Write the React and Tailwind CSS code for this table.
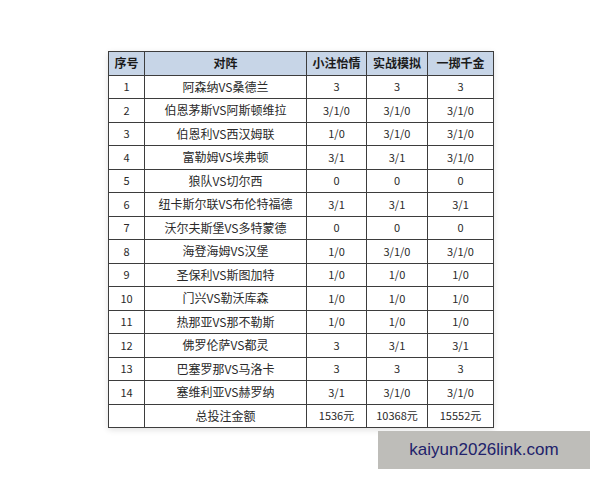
import React from "react";

const rows = [
  ["1", "阿森纳VS桑德兰", "3", "3", "3"],
  ["2", "伯恩茅斯VS阿斯顿维拉", "3/1/0", "3/1/0", "3/1/0"],
  ["3", "伯恩利VS西汉姆联", "1/0", "3/1/0", "3/1/0"],
  ["4", "富勒姆VS埃弗顿", "3/1", "3/1", "3/1/0"],
  ["5", "狼队VS切尔西", "0", "0", "0"],
  ["6", "纽卡斯尔联VS布伦特福德", "3/1", "3/1", "3/1"],
  ["7", "沃尔夫斯堡VS多特蒙德", "0", "0", "0"],
  ["8", "海登海姆VS汉堡", "1/0", "3/1/0", "3/1/0"],
  ["9", "圣保利VS斯图加特", "1/0", "1/0", "1/0"],
  ["10", "门兴VS勒沃库森", "1/0", "1/0", "1/0"],
  ["11", "热那亚VS那不勒斯", "1/0", "1/0", "1/0"],
  ["12", "佛罗伦萨VS都灵", "3", "3/1", "3/1"],
  ["13", "巴塞罗那VS马洛卡", "3", "3", "3"],
  ["14", "塞维利亚VS赫罗纳", "3/1", "3/1/0", "3/1/0"],
  ["", "总投注金额", "1536元", "10368元", "15552元"],
];

const cell = "border border-[#3d3d3d] text-center align-middle p-0";

export default function App() {
  return (
    <div
      className="relative w-[600px] h-[480px] bg-white overflow-hidden"
      style={{ fontFamily: '"Noto Sans CJK SC", "Noto Sans", sans-serif' }}
    >
      <div className="pt-[51px] pl-[108px]">
        <table className="table-fixed border-collapse w-[385px] text-[12px] leading-none text-[#2a2a2a] shadow-[0_2px_6px_rgba(0,0,0,0.12)]">
          <colgroup>
            <col className="w-[36px]" />
            <col className="w-[162px]" />
            <col className="w-[60px]" />
            <col className="w-[61px]" />
            <col className="w-[66px]" />
          </colgroup>
          <thead>
            <tr className="h-[23.5px] bg-[#c7d5e7] font-bold text-[#1b1b1b]">
              <th className={cell}>序号</th>
              <th className={cell}>对阵</th>
              <th className={cell}>小注怡情</th>
              <th className={cell}>实战模拟</th>
              <th className={cell}>一掷千金</th>
            </tr>
          </thead>
          <tbody>
            {rows.map((r, i) => (
              <tr key={i} className="h-[23.5px] bg-white">
                <td className={`${cell} text-[11px]`}>{r[0]}</td>
                <td className={cell}>{r[1]}</td>
                <td className={`${cell} text-[11px]`}>{r[2]}</td>
                <td className={`${cell} text-[11px]`}>{r[3]}</td>
                <td className={`${cell} text-[11px]`}>{r[4]}</td>
              </tr>
            ))}
          </tbody>
        </table>
      </div>
      <div
        className="absolute left-[378px] top-[431px] w-[212px] h-[38px] bg-[#bebdb9] flex items-center justify-center text-[17px] text-[#22226b]"
        style={{ fontFamily: '"Liberation Sans", Arial, sans-serif' }}
      >
        kaiyun2026link.com
      </div>
    </div>
  );
}
